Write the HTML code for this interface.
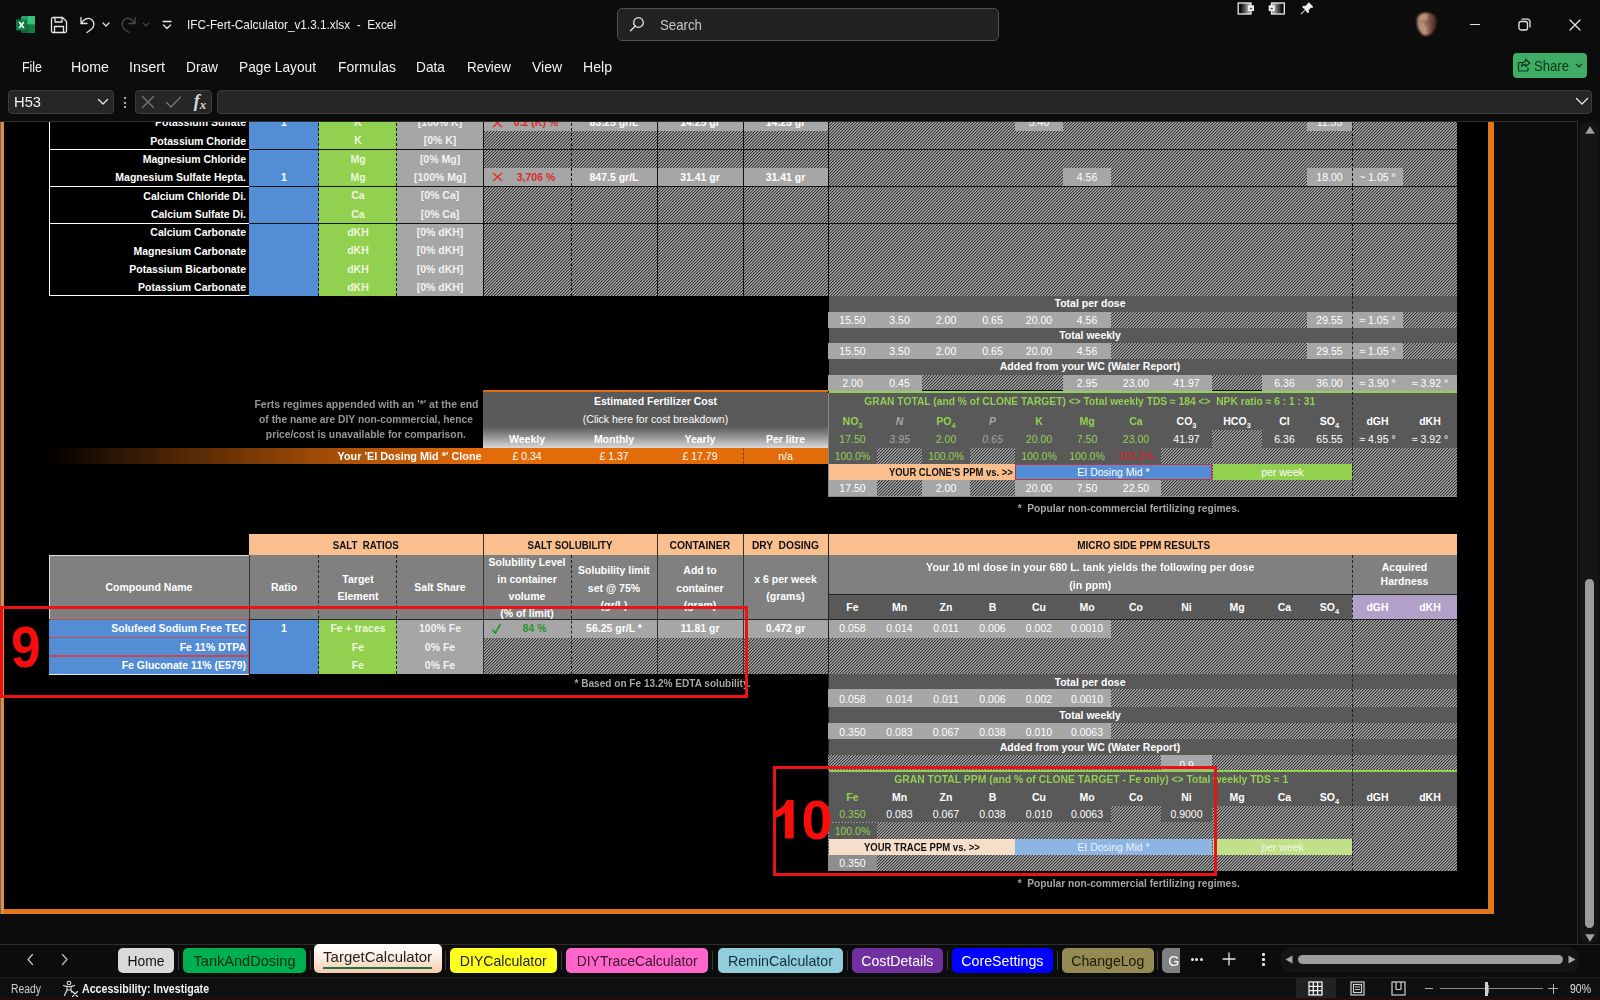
<!DOCTYPE html><html><head><meta charset="utf-8"><title>Excel</title><style>html,body{margin:0;padding:0;background:#0c0c0c;overflow:hidden}
#root{position:relative;width:1600px;height:1000px;overflow:hidden;font-family:"Liberation Sans",sans-serif;background:#0c0c0c}
#root div,#root svg{position:absolute}
#root .t{display:flex;align-items:center;white-space:nowrap;box-sizing:border-box;line-height:1}
#root .t span{display:inline-block;position:static;white-space:pre}
#root .t sub{font-size:70%;vertical-align:baseline;position:relative;top:3px}
.h{background:repeating-linear-gradient(135deg,#3b3b3b 0,#3b3b3b 1.06px,#b4b4b4 1.06px,#b4b4b4 2.1213px)}
</style></head><body><div id="root">
<svg width="0" height="0" style="left:0;top:0"><defs><pattern id="hp" width="3" height="3" patternUnits="userSpaceOnUse" shape-rendering="crispEdges"><rect width="3" height="3" fill="#a8a8a8"/><rect x="0" y="0" width="1" height="1" fill="#363636"/><rect x="2" y="1" width="1" height="1" fill="#363636"/><rect x="1" y="2" width="1" height="1" fill="#363636"/><rect x="1" y="0" width="1" height="1" fill="#7d7d7d"/><rect x="0" y="1" width="1" height="1" fill="#7d7d7d"/><rect x="2" y="2" width="1" height="1" fill="#7d7d7d"/></pattern></defs></svg>
<div id="sheet" style="left:0;top:0;width:1600px;height:1000px">
<div style="left:0px;top:120px;width:1581px;height:824px;background:#0c0c0c;"></div>
<div style="left:0px;top:120px;width:1494px;height:794px;background:#000;"></div>
<div style="left:1488px;top:120px;width:6px;height:794px;background:#e2761b;"></div>
<div style="left:0px;top:909px;width:1494px;height:5px;background:#e2761b;"></div>
<div style="left:1px;top:120px;width:2.5px;height:794px;background:#e38a42;"></div>
<div style="left:0px;top:120px;width:1px;height:824px;background:#6a6a6a;"></div>
<div style="left:249px;top:113px;width:69.5px;height:183.3px;background:#538dd5;"></div>
<div style="left:318.5px;top:113px;width:78.2px;height:183.3px;background:#92d050;"></div>
<div style="left:396.7px;top:113px;width:86.3px;height:183.3px;background:#a6a6a6;"></div>
<svg style="left:483px;top:113px" width="974" height="183" viewBox="483 113 974 183" shape-rendering="crispEdges"><rect x="483" y="113" width="974" height="183" fill="url(#hp)"/></svg>
<div class="t" style="left:49px;top:113.5px;width:200px;height:18.3px;color:#fff;font-size:10.5px;justify-content:flex-end;font-weight:bold;padding-right:3px;"><span style="transform:scaleX(1.000);transform-origin:right center">Potassium Sulfate</span></div>
<div class="t" style="left:249px;top:113px;width:70px;height:18.3px;color:#fff;font-size:10.5px;justify-content:center;font-weight:bold;"><span style="transform:scaleX(1.000);transform-origin:center center">1</span></div>
<div class="t" style="left:319px;top:113px;width:78px;height:18.3px;color:#eef7dd;font-size:10.5px;justify-content:center;font-weight:bold;"><span style="transform:scaleX(1.000);transform-origin:center center">K</span></div>
<div class="t" style="left:397px;top:113px;width:86px;height:18.3px;color:#f2f2f2;font-size:10.5px;justify-content:center;font-weight:bold;"><span style="transform:scaleX(1.000);transform-origin:center center">[100% K]</span></div>
<div class="t" style="left:49px;top:131.8px;width:200px;height:18.4px;color:#fff;font-size:10.5px;justify-content:flex-end;font-weight:bold;padding-right:3px;"><span style="transform:scaleX(1.000);transform-origin:right center">Potassium Choride</span></div>
<div class="t" style="left:319px;top:131.3px;width:78px;height:18.4px;color:#eef7dd;font-size:10.5px;justify-content:center;font-weight:bold;"><span style="transform:scaleX(1.000);transform-origin:center center">K</span></div>
<div class="t" style="left:397px;top:131.3px;width:86px;height:18.4px;color:#f2f2f2;font-size:10.5px;justify-content:center;font-weight:bold;"><span style="transform:scaleX(1.000);transform-origin:center center">[0% K]</span></div>
<div class="t" style="left:49px;top:150.2px;width:200px;height:18.3px;color:#fff;font-size:10.5px;justify-content:flex-end;font-weight:bold;padding-right:3px;"><span style="transform:scaleX(1.000);transform-origin:right center">Magnesium Chloride</span></div>
<div class="t" style="left:319px;top:149.7px;width:78px;height:18.3px;color:#eef7dd;font-size:10.5px;justify-content:center;font-weight:bold;"><span style="transform:scaleX(1.000);transform-origin:center center">Mg</span></div>
<div class="t" style="left:397px;top:149.7px;width:86px;height:18.3px;color:#f2f2f2;font-size:10.5px;justify-content:center;font-weight:bold;"><span style="transform:scaleX(1.000);transform-origin:center center">[0% Mg]</span></div>
<div class="t" style="left:49px;top:168.5px;width:200px;height:18.3px;color:#fff;font-size:10.5px;justify-content:flex-end;font-weight:bold;padding-right:3px;"><span style="transform:scaleX(1.000);transform-origin:right center">Magnesium Sulfate Hepta.</span></div>
<div class="t" style="left:249px;top:168px;width:70px;height:18.3px;color:#fff;font-size:10.5px;justify-content:center;font-weight:bold;"><span style="transform:scaleX(1.000);transform-origin:center center">1</span></div>
<div class="t" style="left:319px;top:168px;width:78px;height:18.3px;color:#eef7dd;font-size:10.5px;justify-content:center;font-weight:bold;"><span style="transform:scaleX(1.000);transform-origin:center center">Mg</span></div>
<div class="t" style="left:397px;top:168px;width:86px;height:18.3px;color:#f2f2f2;font-size:10.5px;justify-content:center;font-weight:bold;"><span style="transform:scaleX(1.000);transform-origin:center center">[100% Mg]</span></div>
<div class="t" style="left:49px;top:186.8px;width:200px;height:18.4px;color:#fff;font-size:10.5px;justify-content:flex-end;font-weight:bold;padding-right:3px;"><span style="transform:scaleX(1.000);transform-origin:right center">Calcium Chloride Di.</span></div>
<div class="t" style="left:319px;top:186.3px;width:78px;height:18.4px;color:#eef7dd;font-size:10.5px;justify-content:center;font-weight:bold;"><span style="transform:scaleX(1.000);transform-origin:center center">Ca</span></div>
<div class="t" style="left:397px;top:186.3px;width:86px;height:18.4px;color:#f2f2f2;font-size:10.5px;justify-content:center;font-weight:bold;"><span style="transform:scaleX(1.000);transform-origin:center center">[0% Ca]</span></div>
<div class="t" style="left:49px;top:205.2px;width:200px;height:18.3px;color:#fff;font-size:10.5px;justify-content:flex-end;font-weight:bold;padding-right:3px;"><span style="transform:scaleX(1.000);transform-origin:right center">Calcium Sulfate Di.</span></div>
<div class="t" style="left:319px;top:204.7px;width:78px;height:18.3px;color:#eef7dd;font-size:10.5px;justify-content:center;font-weight:bold;"><span style="transform:scaleX(1.000);transform-origin:center center">Ca</span></div>
<div class="t" style="left:397px;top:204.7px;width:86px;height:18.3px;color:#f2f2f2;font-size:10.5px;justify-content:center;font-weight:bold;"><span style="transform:scaleX(1.000);transform-origin:center center">[0% Ca]</span></div>
<div class="t" style="left:49px;top:223.5px;width:200px;height:18.3px;color:#fff;font-size:10.5px;justify-content:flex-end;font-weight:bold;padding-right:3px;"><span style="transform:scaleX(1.000);transform-origin:right center">Calcium Carbonate</span></div>
<div class="t" style="left:319px;top:223px;width:78px;height:18.3px;color:#eef7dd;font-size:10.5px;justify-content:center;font-weight:bold;"><span style="transform:scaleX(1.000);transform-origin:center center">dKH</span></div>
<div class="t" style="left:397px;top:223px;width:86px;height:18.3px;color:#f2f2f2;font-size:10.5px;justify-content:center;font-weight:bold;"><span style="transform:scaleX(1.000);transform-origin:center center">[0% dKH]</span></div>
<div class="t" style="left:49px;top:241.8px;width:200px;height:18.4px;color:#fff;font-size:10.5px;justify-content:flex-end;font-weight:bold;padding-right:3px;"><span style="transform:scaleX(1.000);transform-origin:right center">Magnesium Carbonate</span></div>
<div class="t" style="left:319px;top:241.3px;width:78px;height:18.4px;color:#eef7dd;font-size:10.5px;justify-content:center;font-weight:bold;"><span style="transform:scaleX(1.000);transform-origin:center center">dKH</span></div>
<div class="t" style="left:397px;top:241.3px;width:86px;height:18.4px;color:#f2f2f2;font-size:10.5px;justify-content:center;font-weight:bold;"><span style="transform:scaleX(1.000);transform-origin:center center">[0% dKH]</span></div>
<div class="t" style="left:49px;top:260.2px;width:200px;height:18.3px;color:#fff;font-size:10.5px;justify-content:flex-end;font-weight:bold;padding-right:3px;"><span style="transform:scaleX(1.000);transform-origin:right center">Potassium Bicarbonate</span></div>
<div class="t" style="left:319px;top:259.7px;width:78px;height:18.3px;color:#eef7dd;font-size:10.5px;justify-content:center;font-weight:bold;"><span style="transform:scaleX(1.000);transform-origin:center center">dKH</span></div>
<div class="t" style="left:397px;top:259.7px;width:86px;height:18.3px;color:#f2f2f2;font-size:10.5px;justify-content:center;font-weight:bold;"><span style="transform:scaleX(1.000);transform-origin:center center">[0% dKH]</span></div>
<div class="t" style="left:49px;top:278.5px;width:200px;height:18.3px;color:#fff;font-size:10.5px;justify-content:flex-end;font-weight:bold;padding-right:3px;"><span style="transform:scaleX(1.000);transform-origin:right center">Potassium Carbonate</span></div>
<div class="t" style="left:319px;top:278px;width:78px;height:18.3px;color:#eef7dd;font-size:10.5px;justify-content:center;font-weight:bold;"><span style="transform:scaleX(1.000);transform-origin:center center">dKH</span></div>
<div class="t" style="left:397px;top:278px;width:86px;height:18.3px;color:#f2f2f2;font-size:10.5px;justify-content:center;font-weight:bold;"><span style="transform:scaleX(1.000);transform-origin:center center">[0% dKH]</span></div>
<div style="left:483px;top:113px;width:88px;height:18.3px;background:#a6a6a6;"></div>
<div class="t" style="left:483px;top:113px;width:88px;height:18.3px;color:#de2a2a;font-size:10.5px;justify-content:center;font-weight:bold;padding-left:18px;"><span style="transform:scaleX(1.000);transform-origin:center center">0.2 (K) %</span></div>
<svg style="left:491.500px;top:117.5px" width="11" height="10" viewBox="0 0 11 10" fill="none" stroke="#e22a2a" stroke-width="1.400"><path d="M1 1l9 8M10 1l-9 8"/></svg>
<div style="left:571px;top:113px;width:86px;height:18.3px;background:#a6a6a6;"></div>
<div class="t" style="left:571px;top:113px;width:86px;height:18.3px;color:#fff;font-size:10.5px;justify-content:center;font-weight:bold;"><span style="transform:scaleX(1.000);transform-origin:center center">83.25 gr/L</span></div>
<div style="left:657px;top:113px;width:86px;height:18.3px;background:#a6a6a6;"></div>
<div class="t" style="left:657px;top:113px;width:86px;height:18.3px;color:#fff;font-size:10.5px;justify-content:center;font-weight:bold;"><span style="transform:scaleX(1.000);transform-origin:center center">14.25 gr</span></div>
<div style="left:743px;top:113px;width:85px;height:18.3px;background:#a6a6a6;"></div>
<div class="t" style="left:743px;top:113px;width:85px;height:18.3px;color:#fff;font-size:10.5px;justify-content:center;font-weight:bold;"><span style="transform:scaleX(1.000);transform-origin:center center">14.25 gr</span></div>
<div style="left:1015px;top:113px;width:48px;height:18.3px;background:#a6a6a6;"></div>
<div class="t" style="left:1015px;top:113px;width:48px;height:18.3px;color:#fff;font-size:10.5px;justify-content:center;"><span style="transform:scaleX(1.000);transform-origin:center center">5.40</span></div>
<div style="left:1307px;top:113px;width:45px;height:18.3px;background:#a6a6a6;"></div>
<div class="t" style="left:1307px;top:113px;width:45px;height:18.3px;color:#fff;font-size:10.5px;justify-content:center;"><span style="transform:scaleX(1.000);transform-origin:center center">11.55</span></div>
<div style="left:483px;top:168px;width:88px;height:18.3px;background:#a6a6a6;"></div>
<div class="t" style="left:483px;top:168px;width:88px;height:18.3px;color:#de2a2a;font-size:10.5px;justify-content:center;font-weight:bold;padding-left:18px;"><span style="transform:scaleX(1.000);transform-origin:center center">3,706 %</span></div>
<svg style="left:491.500px;top:171.5px" width="11" height="10" viewBox="0 0 11 10" fill="none" stroke="#e22a2a" stroke-width="1.400"><path d="M1 1l9 8M10 1l-9 8"/></svg>
<div style="left:571px;top:168px;width:86px;height:18.3px;background:#a6a6a6;"></div>
<div class="t" style="left:571px;top:168px;width:86px;height:18.3px;color:#fff;font-size:10.5px;justify-content:center;font-weight:bold;"><span style="transform:scaleX(1.000);transform-origin:center center">847.5 gr/L</span></div>
<div style="left:657px;top:168px;width:86px;height:18.3px;background:#a6a6a6;"></div>
<div class="t" style="left:657px;top:168px;width:86px;height:18.3px;color:#fff;font-size:10.5px;justify-content:center;font-weight:bold;"><span style="transform:scaleX(1.000);transform-origin:center center">31.41 gr</span></div>
<div style="left:743px;top:168px;width:85px;height:18.3px;background:#a6a6a6;"></div>
<div class="t" style="left:743px;top:168px;width:85px;height:18.3px;color:#fff;font-size:10.5px;justify-content:center;font-weight:bold;"><span style="transform:scaleX(1.000);transform-origin:center center">31.41 gr</span></div>
<div style="left:1063px;top:168px;width:48px;height:18.3px;background:#a6a6a6;"></div>
<div class="t" style="left:1063px;top:168px;width:48px;height:18.3px;color:#fff;font-size:10.5px;justify-content:center;"><span style="transform:scaleX(1.000);transform-origin:center center">4.56</span></div>
<div style="left:1307px;top:168px;width:45px;height:18.3px;background:#a6a6a6;"></div>
<div class="t" style="left:1307px;top:168px;width:45px;height:18.3px;color:#fff;font-size:10.5px;justify-content:center;"><span style="transform:scaleX(1.000);transform-origin:center center">18.00</span></div>
<div style="left:1352px;top:168px;width:51px;height:18.3px;background:#a6a6a6;"></div>
<div class="t" style="left:1352px;top:168px;width:51px;height:18.3px;color:#fff;font-size:10.5px;justify-content:center;"><span style="transform:scaleX(1.000);transform-origin:center center">~ 1.05 °</span></div>
<div style="left:49px;top:149.2px;width:200px;height:1px;background:#fff;"></div>
<div style="left:249px;top:149.2px;width:1208px;height:1px;background:#111;"></div>
<div style="left:49px;top:185.8px;width:200px;height:1px;background:#fff;"></div>
<div style="left:249px;top:185.8px;width:1208px;height:1px;background:#111;"></div>
<div style="left:49px;top:222.5px;width:200px;height:1px;background:#fff;"></div>
<div style="left:249px;top:222.5px;width:1208px;height:1px;background:#111;"></div>
<div style="left:49px;top:113px;width:1px;height:183.3px;background:#fff;"></div>
<div style="left:49px;top:295.3px;width:200px;height:1px;background:#fff;"></div>
<div style="left:318px;top:113.0px;height:183.3px;width:0;border-left:1px dashed #111"></div>
<div style="left:396.2px;top:113.0px;height:183.3px;width:0;border-left:1px dashed #111"></div>
<div style="left:482.5px;top:113px;width:1px;height:183.3px;background:#111;"></div>
<div style="left:570.5px;top:113.0px;height:183.3px;width:0;border-left:1px dashed #111"></div>
<div style="left:656.5px;top:113px;width:1px;height:183.3px;background:#111;"></div>
<div style="left:742.5px;top:113px;width:1px;height:183.3px;background:#111;"></div>
<div style="left:827.5px;top:113px;width:1px;height:183.3px;background:#111;"></div>
<div style="left:1351.5px;top:113.0px;height:183.3px;width:0;border-left:1px dashed #111"></div>
<div style="left:828.5px;top:296.3px;width:628.5px;height:15.7px;background:#595959;"></div>
<div class="t" style="left:828px;top:295.8px;width:524px;height:15.7px;color:#fff;font-size:10.5px;justify-content:center;font-weight:bold;"><span style="transform:scaleX(1.000);transform-origin:center center">Total per dose</span></div>
<div style="left:828.5px;top:327.5px;width:628.5px;height:15.5px;background:#595959;"></div>
<div class="t" style="left:828px;top:327px;width:524px;height:15.5px;color:#fff;font-size:10.5px;justify-content:center;font-weight:bold;"><span style="transform:scaleX(1.000);transform-origin:center center">Total weekly</span></div>
<div style="left:828.5px;top:359px;width:628.5px;height:16px;background:#595959;"></div>
<div class="t" style="left:828px;top:358.5px;width:524px;height:16px;color:#fff;font-size:10.5px;justify-content:center;font-weight:bold;"><span style="transform:scaleX(1.000);transform-origin:center center">Added from your WC (Water Report)</span></div>
<svg style="left:828px;top:312px" width="629" height="16" viewBox="828 312 629 16" shape-rendering="crispEdges"><rect x="828" y="312" width="629" height="16" fill="url(#hp)"/></svg>
<div style="left:828px;top:312px;width:49px;height:15.5px;background:#a6a6a6;"></div>
<div style="left:877px;top:312px;width:45px;height:15.5px;background:#a6a6a6;"></div>
<div style="left:922px;top:312px;width:48px;height:15.5px;background:#a6a6a6;"></div>
<div style="left:970px;top:312px;width:45px;height:15.5px;background:#a6a6a6;"></div>
<div style="left:1015px;top:312px;width:48px;height:15.5px;background:#a6a6a6;"></div>
<div style="left:1063px;top:312px;width:48px;height:15.5px;background:#a6a6a6;"></div>
<div style="left:1307px;top:312px;width:45px;height:15.5px;background:#a6a6a6;"></div>
<div style="left:1352px;top:312px;width:51px;height:15.5px;background:#a6a6a6;"></div>
<div class="t" style="left:824px;top:312px;width:57px;height:15.5px;color:#fff;font-size:10.5px;justify-content:center;"><span style="transform:scaleX(1.000);transform-origin:center center">15.50</span></div>
<div class="t" style="left:873px;top:312px;width:53px;height:15.5px;color:#fff;font-size:10.5px;justify-content:center;"><span style="transform:scaleX(1.000);transform-origin:center center">3.50</span></div>
<div class="t" style="left:918px;top:312px;width:56px;height:15.5px;color:#fff;font-size:10.5px;justify-content:center;"><span style="transform:scaleX(1.000);transform-origin:center center">2.00</span></div>
<div class="t" style="left:966px;top:312px;width:53px;height:15.5px;color:#fff;font-size:10.5px;justify-content:center;"><span style="transform:scaleX(1.000);transform-origin:center center">0.65</span></div>
<div class="t" style="left:1011px;top:312px;width:56px;height:15.5px;color:#fff;font-size:10.5px;justify-content:center;"><span style="transform:scaleX(1.000);transform-origin:center center">20.00</span></div>
<div class="t" style="left:1059px;top:312px;width:56px;height:15.5px;color:#fff;font-size:10.5px;justify-content:center;"><span style="transform:scaleX(1.000);transform-origin:center center">4.56</span></div>
<div class="t" style="left:1303px;top:312px;width:53px;height:15.5px;color:#fff;font-size:10.5px;justify-content:center;"><span style="transform:scaleX(1.000);transform-origin:center center">29.55</span></div>
<div class="t" style="left:1348px;top:312px;width:59px;height:15.5px;color:#fff;font-size:10.5px;justify-content:center;"><span style="transform:scaleX(1.000);transform-origin:center center">≈ 1.05 °</span></div>
<svg style="left:828px;top:343px" width="629" height="16" viewBox="828 343 629 16" shape-rendering="crispEdges"><rect x="828" y="343" width="629" height="16" fill="url(#hp)"/></svg>
<div style="left:828px;top:343px;width:49px;height:16px;background:#a6a6a6;"></div>
<div style="left:877px;top:343px;width:45px;height:16px;background:#a6a6a6;"></div>
<div style="left:922px;top:343px;width:48px;height:16px;background:#a6a6a6;"></div>
<div style="left:970px;top:343px;width:45px;height:16px;background:#a6a6a6;"></div>
<div style="left:1015px;top:343px;width:48px;height:16px;background:#a6a6a6;"></div>
<div style="left:1063px;top:343px;width:48px;height:16px;background:#a6a6a6;"></div>
<div style="left:1307px;top:343px;width:45px;height:16px;background:#a6a6a6;"></div>
<div style="left:1352px;top:343px;width:51px;height:16px;background:#a6a6a6;"></div>
<div class="t" style="left:824px;top:343px;width:57px;height:16px;color:#fff;font-size:10.5px;justify-content:center;"><span style="transform:scaleX(1.000);transform-origin:center center">15.50</span></div>
<div class="t" style="left:873px;top:343px;width:53px;height:16px;color:#fff;font-size:10.5px;justify-content:center;"><span style="transform:scaleX(1.000);transform-origin:center center">3.50</span></div>
<div class="t" style="left:918px;top:343px;width:56px;height:16px;color:#fff;font-size:10.5px;justify-content:center;"><span style="transform:scaleX(1.000);transform-origin:center center">2.00</span></div>
<div class="t" style="left:966px;top:343px;width:53px;height:16px;color:#fff;font-size:10.5px;justify-content:center;"><span style="transform:scaleX(1.000);transform-origin:center center">0.65</span></div>
<div class="t" style="left:1011px;top:343px;width:56px;height:16px;color:#fff;font-size:10.5px;justify-content:center;"><span style="transform:scaleX(1.000);transform-origin:center center">20.00</span></div>
<div class="t" style="left:1059px;top:343px;width:56px;height:16px;color:#fff;font-size:10.5px;justify-content:center;"><span style="transform:scaleX(1.000);transform-origin:center center">4.56</span></div>
<div class="t" style="left:1303px;top:343px;width:53px;height:16px;color:#fff;font-size:10.5px;justify-content:center;"><span style="transform:scaleX(1.000);transform-origin:center center">29.55</span></div>
<div class="t" style="left:1348px;top:343px;width:59px;height:16px;color:#fff;font-size:10.5px;justify-content:center;"><span style="transform:scaleX(1.000);transform-origin:center center">≈ 1.05 °</span></div>
<svg style="left:828px;top:375px" width="629" height="15" viewBox="828 375 629 15" shape-rendering="crispEdges"><rect x="828" y="375" width="629" height="15" fill="url(#hp)"/></svg>
<div style="left:828px;top:375px;width:49px;height:15.5px;background:#a6a6a6;"></div>
<div style="left:877px;top:375px;width:45px;height:15.5px;background:#a6a6a6;"></div>
<div style="left:1063px;top:375px;width:48px;height:15.5px;background:#a6a6a6;"></div>
<div style="left:1111px;top:375px;width:50px;height:15.5px;background:#a6a6a6;"></div>
<div style="left:1161px;top:375px;width:51px;height:15.5px;background:#a6a6a6;"></div>
<div style="left:1262px;top:375px;width:45px;height:15.5px;background:#a6a6a6;"></div>
<div style="left:1307px;top:375px;width:45px;height:15.5px;background:#a6a6a6;"></div>
<div style="left:1352px;top:375px;width:51px;height:15.5px;background:#a6a6a6;"></div>
<div style="left:1403px;top:375px;width:54px;height:15.5px;background:#a6a6a6;"></div>
<div class="t" style="left:824px;top:375px;width:57px;height:15.5px;color:#fff;font-size:10.5px;justify-content:center;"><span style="transform:scaleX(1.000);transform-origin:center center">2.00</span></div>
<div class="t" style="left:873px;top:375px;width:53px;height:15.5px;color:#fff;font-size:10.5px;justify-content:center;"><span style="transform:scaleX(1.000);transform-origin:center center">0.45</span></div>
<div class="t" style="left:1059px;top:375px;width:56px;height:15.5px;color:#fff;font-size:10.5px;justify-content:center;"><span style="transform:scaleX(1.000);transform-origin:center center">2.95</span></div>
<div class="t" style="left:1107px;top:375px;width:58px;height:15.5px;color:#fff;font-size:10.5px;justify-content:center;"><span style="transform:scaleX(1.000);transform-origin:center center">23.00</span></div>
<div class="t" style="left:1157px;top:375px;width:59px;height:15.5px;color:#fff;font-size:10.5px;justify-content:center;"><span style="transform:scaleX(1.000);transform-origin:center center">41.97</span></div>
<div class="t" style="left:1258px;top:375px;width:53px;height:15.5px;color:#fff;font-size:10.5px;justify-content:center;"><span style="transform:scaleX(1.000);transform-origin:center center">6.36</span></div>
<div class="t" style="left:1303px;top:375px;width:53px;height:15.5px;color:#fff;font-size:10.5px;justify-content:center;"><span style="transform:scaleX(1.000);transform-origin:center center">36.00</span></div>
<div class="t" style="left:1348px;top:375px;width:59px;height:15.5px;color:#fff;font-size:10.5px;justify-content:center;"><span style="transform:scaleX(1.000);transform-origin:center center">≈ 3.90 °</span></div>
<div class="t" style="left:1399px;top:375px;width:62px;height:15.5px;color:#fff;font-size:10.5px;justify-content:center;"><span style="transform:scaleX(1.000);transform-origin:center center">≈ 3.92 °</span></div>
<div style="left:828.5px;top:390.5px;width:628.5px;height:2px;background:#92d050;"></div>
<div style="left:828.5px;top:392.5px;width:628.5px;height:55.5px;background:#595959;"></div>
<div class="t" style="left:828px;top:391.5px;width:524px;height:19.5px;color:#92d050;font-size:10.5px;justify-content:center;font-weight:bold;"><span style="transform:scaleX(0.977);transform-origin:center center">GRAN TOTAL (and % of CLONE TARGET) &lt;&gt; Total weekly TDS ≈ 184 &lt;&gt;  NPK ratio ≈ 6 : 1 : 31</span></div>
<div class="t" style="left:824px;top:412px;width:57px;height:18px;color:#92d050;font-size:10.5px;justify-content:center;font-weight:bold;"><span style="transform:scaleX(1.000);transform-origin:center center">NO<sub>3</sub></span></div>
<div class="t" style="left:873px;top:412px;width:53px;height:18px;color:#a6a6a6;font-size:10.5px;justify-content:center;font-weight:bold;font-style:italic;"><span style="transform:scaleX(1.000);transform-origin:center center">N</span></div>
<div class="t" style="left:918px;top:412px;width:56px;height:18px;color:#92d050;font-size:10.5px;justify-content:center;font-weight:bold;"><span style="transform:scaleX(1.000);transform-origin:center center">PO<sub>4</sub></span></div>
<div class="t" style="left:966px;top:412px;width:53px;height:18px;color:#a6a6a6;font-size:10.5px;justify-content:center;font-weight:bold;font-style:italic;"><span style="transform:scaleX(1.000);transform-origin:center center">P</span></div>
<div class="t" style="left:1011px;top:412px;width:56px;height:18px;color:#92d050;font-size:10.5px;justify-content:center;font-weight:bold;"><span style="transform:scaleX(1.000);transform-origin:center center">K</span></div>
<div class="t" style="left:1059px;top:412px;width:56px;height:18px;color:#92d050;font-size:10.5px;justify-content:center;font-weight:bold;"><span style="transform:scaleX(1.000);transform-origin:center center">Mg</span></div>
<div class="t" style="left:1107px;top:412px;width:58px;height:18px;color:#92d050;font-size:10.5px;justify-content:center;font-weight:bold;"><span style="transform:scaleX(1.000);transform-origin:center center">Ca</span></div>
<div class="t" style="left:1157px;top:412px;width:59px;height:18px;color:#fff;font-size:10.5px;justify-content:center;font-weight:bold;"><span style="transform:scaleX(1.000);transform-origin:center center">CO<sub>3</sub></span></div>
<div class="t" style="left:1208px;top:412px;width:58px;height:18px;color:#fff;font-size:10.5px;justify-content:center;font-weight:bold;"><span style="transform:scaleX(1.000);transform-origin:center center">HCO<sub>3</sub></span></div>
<div class="t" style="left:1258px;top:412px;width:53px;height:18px;color:#fff;font-size:10.5px;justify-content:center;font-weight:bold;"><span style="transform:scaleX(1.000);transform-origin:center center">Cl</span></div>
<div class="t" style="left:1303px;top:412px;width:53px;height:18px;color:#fff;font-size:10.5px;justify-content:center;font-weight:bold;"><span style="transform:scaleX(1.000);transform-origin:center center">SO<sub>4</sub></span></div>
<div class="t" style="left:1348px;top:412px;width:59px;height:18px;color:#fff;font-size:10.5px;justify-content:center;font-weight:bold;"><span style="transform:scaleX(1.000);transform-origin:center center">dGH</span></div>
<div class="t" style="left:1399px;top:412px;width:62px;height:18px;color:#fff;font-size:10.5px;justify-content:center;font-weight:bold;"><span style="transform:scaleX(1.000);transform-origin:center center">dKH</span></div>
<svg style="left:1212px;top:430px" width="50" height="18" viewBox="1212 430 50 18" shape-rendering="crispEdges"><rect x="1212" y="430" width="50" height="18" fill="url(#hp)"/></svg>
<div class="t" style="left:824px;top:430px;width:57px;height:18px;color:#92d050;font-size:10.5px;justify-content:center;"><span style="transform:scaleX(1.000);transform-origin:center center">17.50</span></div>
<div class="t" style="left:873px;top:430px;width:53px;height:18px;color:#a6a6a6;font-size:10.5px;justify-content:center;font-style:italic;"><span style="transform:scaleX(1.000);transform-origin:center center">3.95</span></div>
<div class="t" style="left:918px;top:430px;width:56px;height:18px;color:#92d050;font-size:10.5px;justify-content:center;"><span style="transform:scaleX(1.000);transform-origin:center center">2.00</span></div>
<div class="t" style="left:966px;top:430px;width:53px;height:18px;color:#a6a6a6;font-size:10.5px;justify-content:center;font-style:italic;"><span style="transform:scaleX(1.000);transform-origin:center center">0.65</span></div>
<div class="t" style="left:1011px;top:430px;width:56px;height:18px;color:#92d050;font-size:10.5px;justify-content:center;"><span style="transform:scaleX(1.000);transform-origin:center center">20.00</span></div>
<div class="t" style="left:1059px;top:430px;width:56px;height:18px;color:#92d050;font-size:10.5px;justify-content:center;"><span style="transform:scaleX(1.000);transform-origin:center center">7.50</span></div>
<div class="t" style="left:1107px;top:430px;width:58px;height:18px;color:#92d050;font-size:10.5px;justify-content:center;"><span style="transform:scaleX(1.000);transform-origin:center center">23.00</span></div>
<div class="t" style="left:1157px;top:430px;width:59px;height:18px;color:#fff;font-size:10.5px;justify-content:center;"><span style="transform:scaleX(1.000);transform-origin:center center">41.97</span></div>
<div class="t" style="left:1258px;top:430px;width:53px;height:18px;color:#fff;font-size:10.5px;justify-content:center;"><span style="transform:scaleX(1.000);transform-origin:center center">6.36</span></div>
<div class="t" style="left:1303px;top:430px;width:53px;height:18px;color:#fff;font-size:10.5px;justify-content:center;"><span style="transform:scaleX(1.000);transform-origin:center center">65.55</span></div>
<div class="t" style="left:1348px;top:430px;width:59px;height:18px;color:#fff;font-size:10.5px;justify-content:center;"><span style="transform:scaleX(1.000);transform-origin:center center">≈ 4.95 °</span></div>
<div class="t" style="left:1399px;top:430px;width:62px;height:18px;color:#fff;font-size:10.5px;justify-content:center;"><span style="transform:scaleX(1.000);transform-origin:center center">≈ 3.92 °</span></div>
<svg style="left:828px;top:448px" width="629" height="16" viewBox="828 448 629 16" shape-rendering="crispEdges"><rect x="828" y="448" width="629" height="16" fill="url(#hp)"/></svg>
<div style="left:828px;top:448px;width:49px;height:16px;background:#595959;"></div>
<div class="t" style="left:824px;top:448px;width:57px;height:16px;color:#92d050;font-size:10.5px;justify-content:center;"><span style="transform:scaleX(1.000);transform-origin:center center">100.0%</span></div>
<div style="left:922px;top:448px;width:48px;height:16px;background:#595959;"></div>
<div class="t" style="left:918px;top:448px;width:56px;height:16px;color:#92d050;font-size:10.5px;justify-content:center;"><span style="transform:scaleX(1.000);transform-origin:center center">100.0%</span></div>
<div style="left:1015px;top:448px;width:48px;height:16px;background:#595959;"></div>
<div class="t" style="left:1011px;top:448px;width:56px;height:16px;color:#92d050;font-size:10.5px;justify-content:center;"><span style="transform:scaleX(1.000);transform-origin:center center">100.0%</span></div>
<div style="left:1063px;top:448px;width:48px;height:16px;background:#595959;"></div>
<div class="t" style="left:1059px;top:448px;width:56px;height:16px;color:#92d050;font-size:10.5px;justify-content:center;"><span style="transform:scaleX(1.000);transform-origin:center center">100.0%</span></div>
<div style="left:1111px;top:448px;width:50px;height:16px;background:#595959;"></div>
<div class="t" style="left:1107px;top:448px;width:58px;height:16px;color:#e02020;font-size:10.5px;justify-content:center;"><span style="transform:scaleX(1.000);transform-origin:center center">102.2%</span></div>
<svg style="left:828px;top:464px" width="629" height="16" viewBox="828 464 629 16" shape-rendering="crispEdges"><rect x="828" y="464" width="629" height="16" fill="url(#hp)"/></svg>
<div style="left:828.5px;top:464px;width:186.5px;height:16px;background:#fabf8f;"></div>
<div class="t" style="left:828px;top:464px;width:187px;height:16px;color:#111;font-size:10.5px;justify-content:flex-end;font-weight:bold;padding-right:2.5px;"><span style="transform:scaleX(0.899);transform-origin:right center">YOUR CLONE'S PPM vs. &gt;&gt;</span></div>
<div style="left:1015px;top:464px;width:197px;height:16px;background:#538dd5;box-shadow:inset 0 0 0 1px #d03030;"></div>
<div class="t" style="left:1015px;top:464px;width:197px;height:16px;color:#fff;font-size:10.5px;justify-content:center;"><span style="transform:scaleX(1.000);transform-origin:center center">EI Dosing Mid *</span></div>
<div style="left:1213px;top:464px;width:139px;height:16px;background:#92d050;"></div>
<div class="t" style="left:1213px;top:464px;width:139px;height:16px;color:#fff;font-size:10.5px;justify-content:center;"><span style="transform:scaleX(1.000);transform-origin:center center">per week</span></div>
<svg style="left:828px;top:480px" width="629" height="16" viewBox="828 480 629 16" shape-rendering="crispEdges"><rect x="828" y="480" width="629" height="16" fill="url(#hp)"/></svg>
<div style="left:828px;top:480px;width:49px;height:16.5px;background:#a6a6a6;"></div>
<div style="left:922px;top:480px;width:48px;height:16.5px;background:#a6a6a6;"></div>
<div style="left:1015px;top:480px;width:48px;height:16.5px;background:#a6a6a6;"></div>
<div style="left:1063px;top:480px;width:48px;height:16.5px;background:#a6a6a6;"></div>
<div style="left:1111px;top:480px;width:50px;height:16.5px;background:#a6a6a6;"></div>
<div class="t" style="left:824px;top:480px;width:57px;height:16.5px;color:#fff;font-size:10.5px;justify-content:center;"><span style="transform:scaleX(1.000);transform-origin:center center">17.50</span></div>
<div class="t" style="left:918px;top:480px;width:56px;height:16.5px;color:#fff;font-size:10.5px;justify-content:center;"><span style="transform:scaleX(1.000);transform-origin:center center">2.00</span></div>
<div class="t" style="left:1011px;top:480px;width:56px;height:16.5px;color:#fff;font-size:10.5px;justify-content:center;"><span style="transform:scaleX(1.000);transform-origin:center center">20.00</span></div>
<div class="t" style="left:1059px;top:480px;width:56px;height:16.5px;color:#fff;font-size:10.5px;justify-content:center;"><span style="transform:scaleX(1.000);transform-origin:center center">7.50</span></div>
<div class="t" style="left:1107px;top:480px;width:58px;height:16.5px;color:#fff;font-size:10.5px;justify-content:center;"><span style="transform:scaleX(1.000);transform-origin:center center">22.50</span></div>
<div style="left:1351.5px;top:296.3px;height:200.2px;width:0;border-left:1px dashed #222"></div>
<div style="left:828px;top:392.5px;width:1px;height:104.5px;background:#8a8a8a;"></div>
<div style="left:828px;top:496.3px;width:629px;height:0.9px;background:#8a8a8a;"></div>
<div class="t" style="left:990px;top:499px;width:270px;height:18px;color:#a6a6a6;font-size:10.5px;justify-content:flex-end;font-weight:bold;padding-right:20px;"><span style="transform:scaleX(0.971);transform-origin:right center">*  Popular non-commercial fertilizing regimes.</span></div>
<div style="left:483px;top:390.5px;width:345px;height:57.5px;background:linear-gradient(#595959 0,#5a5a5a 62%,#8a8a8a 78%,#d9d9d9 100%)"></div>
<div style="left:483px;top:390px;width:345px;height:1.5px;background:#e26b0a;"></div>
<div class="t" style="left:483px;top:392px;width:345px;height:18px;color:#fff;font-size:10.5px;justify-content:center;font-weight:bold;"><span style="transform:scaleX(1.000);transform-origin:center center">Estimated Fertilizer Cost</span></div>
<div class="t" style="left:483px;top:410px;width:345px;height:18px;color:#fff;font-size:10.5px;justify-content:center;"><span style="transform:scaleX(1.000);transform-origin:center center">(Click here for cost breakdown)</span></div>
<div class="t" style="left:483px;top:430px;width:88px;height:18px;color:#fff;font-size:10.5px;justify-content:center;font-weight:bold;"><span style="transform:scaleX(1.000);transform-origin:center center">Weekly</span></div>
<div class="t" style="left:571px;top:430px;width:86px;height:18px;color:#fff;font-size:10.5px;justify-content:center;font-weight:bold;"><span style="transform:scaleX(1.000);transform-origin:center center">Monthly</span></div>
<div class="t" style="left:657px;top:430px;width:86px;height:18px;color:#fff;font-size:10.5px;justify-content:center;font-weight:bold;"><span style="transform:scaleX(1.000);transform-origin:center center">Yearly</span></div>
<div class="t" style="left:743px;top:430px;width:85px;height:18px;color:#fff;font-size:10.5px;justify-content:center;font-weight:bold;"><span style="transform:scaleX(1.000);transform-origin:center center">Per litre</span></div>
<div style="left:49px;top:448px;width:779px;height:16px;background:linear-gradient(90deg,#000 0,#2a1403 8%,#a04c07 35%,#e26b0a 55%,#e26b0a 100%)"></div>
<div class="t" style="left:249px;top:448px;width:234px;height:16px;color:#fff;font-size:10.5px;justify-content:flex-end;font-weight:bold;padding-right:1px;"><span style="transform:scaleX(1.032);transform-origin:right center">Your 'EI Dosing Mid *' Clone</span></div>
<div class="t" style="left:483px;top:448px;width:88px;height:16px;color:#fff;font-size:10.5px;justify-content:center;"><span style="transform:scaleX(1.000);transform-origin:center center">£ 0.34</span></div>
<div class="t" style="left:571px;top:448px;width:86px;height:16px;color:#fff;font-size:10.5px;justify-content:center;"><span style="transform:scaleX(1.000);transform-origin:center center">£ 1.37</span></div>
<div class="t" style="left:657px;top:448px;width:86px;height:16px;color:#fff;font-size:10.5px;justify-content:center;"><span style="transform:scaleX(1.000);transform-origin:center center">£ 17.79</span></div>
<div class="t" style="left:743px;top:448px;width:85px;height:16px;color:#fff;font-size:10.5px;justify-content:center;"><span style="transform:scaleX(1.000);transform-origin:center center">n/a</span></div>
<div style="left:742.5px;top:448px;height:16px;width:0;border-left:1px dashed #8a3a05"></div>
<div class="t" style="left:249px;top:397px;width:234px;height:15px;color:#969696;font-size:10.5px;justify-content:center;font-weight:bold;"><span style="transform:scaleX(0.996);transform-origin:center center">Ferts regimes appended with an '*' at the end</span></div>
<div class="t" style="left:249px;top:412px;width:234px;height:15px;color:#969696;font-size:10.5px;justify-content:center;font-weight:bold;"><span style="transform:scaleX(0.981);transform-origin:center center">of the name are DIY non-commercial, hence</span></div>
<div class="t" style="left:249px;top:427px;width:234px;height:15px;color:#969696;font-size:10.5px;justify-content:center;font-weight:bold;"><span style="transform:scaleX(0.982);transform-origin:center center">price/cost is unavailable for comparison.</span></div>
<div style="left:249px;top:534px;width:1208px;height:20.5px;background:#fabf8f;"></div>
<div class="t" style="left:249px;top:534.75px;width:234px;height:20.5px;color:#111;font-size:10.5px;justify-content:center;font-weight:bold;"><span style="transform:scaleX(0.925);transform-origin:center center">SALT  RATIOS</span></div>
<div class="t" style="left:483px;top:534.75px;width:174px;height:20.5px;color:#111;font-size:10.5px;justify-content:center;font-weight:bold;"><span style="transform:scaleX(0.924);transform-origin:center center">SALT SOLUBILITY</span></div>
<div class="t" style="left:657px;top:534.75px;width:86px;height:20.5px;color:#111;font-size:10.5px;justify-content:center;font-weight:bold;"><span style="transform:scaleX(0.982);transform-origin:center center">CONTAINER</span></div>
<div class="t" style="left:743px;top:534.75px;width:85px;height:20.5px;color:#111;font-size:10.5px;justify-content:center;font-weight:bold;"><span style="transform:scaleX(0.973);transform-origin:center center">DRY  DOSING</span></div>
<div class="t" style="left:828px;top:534.75px;width:632px;height:20.5px;color:#111;font-size:10.5px;justify-content:center;font-weight:bold;"><span style="transform:scaleX(0.955);transform-origin:center center">MICRO SIDE PPM RESULTS</span></div>
<div style="left:482.5px;top:534px;width:1px;height:20.5px;background:#333;"></div>
<div style="left:656.5px;top:534px;width:1px;height:20.5px;background:#333;"></div>
<div style="left:742.5px;top:534px;width:1px;height:20.5px;background:#333;"></div>
<div style="left:827.5px;top:534px;width:1px;height:20.5px;background:#333;"></div>
<div style="left:49px;top:554.5px;width:1408px;height:65px;background:#808080;"></div>
<div style="left:49px;top:554.5px;width:1px;height:119.8px;background:#ddd;"></div>
<div style="left:49px;top:554.5px;width:200px;height:1px;background:#ddd;"></div>
<div class="t" style="left:49px;top:555.2px;width:200px;height:65px;color:#fff;font-size:10.5px;justify-content:center;font-weight:bold;"><span style="transform:scaleX(1.000);transform-origin:center center">Compound Name</span></div>
<div class="t" style="left:249px;top:555.2px;width:70px;height:65px;color:#fff;font-size:10.5px;justify-content:center;font-weight:bold;"><span style="transform:scaleX(1.000);transform-origin:center center">Ratio</span></div>
<div class="t" style="left:319px;top:555.7px;width:78px;height:65px;color:#fff;font-size:10.5px;justify-content:center;font-weight:bold;line-height:17.3px;text-align:center;overflow:hidden;"><span style="transform:scaleX(1.000);transform-origin:center center">Target<br>Element</span></div>
<div class="t" style="left:397px;top:555.2px;width:86px;height:65px;color:#fff;font-size:10.5px;justify-content:center;font-weight:bold;"><span style="transform:scaleX(1.000);transform-origin:center center">Salt Share</span></div>
<div class="t" style="left:483px;top:555.7px;width:88px;height:65px;color:#fff;font-size:10.5px;justify-content:center;font-weight:bold;line-height:17.3px;text-align:center;overflow:hidden;"><span style="transform:scaleX(1.000);transform-origin:center center">Solubility Level<br>in container<br>volume<br>(% of limit)</span></div>
<div class="t" style="left:571px;top:555.7px;width:86px;height:65px;color:#fff;font-size:10.5px;justify-content:center;font-weight:bold;line-height:17.3px;text-align:center;overflow:hidden;"><span style="transform:scaleX(1.000);transform-origin:center center">Solubility limit<br>set @ 75%<br>(gr/L)</span></div>
<div class="t" style="left:657px;top:555.7px;width:86px;height:65px;color:#fff;font-size:10.5px;justify-content:center;font-weight:bold;line-height:17.3px;text-align:center;overflow:hidden;"><span style="transform:scaleX(1.000);transform-origin:center center">Add to<br>container<br>(gram)</span></div>
<div class="t" style="left:743px;top:555.7px;width:85px;height:65px;color:#fff;font-size:10.5px;justify-content:center;font-weight:bold;line-height:17.3px;text-align:center;overflow:hidden;"><span style="transform:scaleX(1.000);transform-origin:center center">x 6 per week<br>(grams)</span></div>
<div class="t" style="left:828px;top:556px;width:524px;height:39.5px;color:#fff;font-size:10.5px;justify-content:center;font-weight:bold;line-height:18px;text-align:center;"><span style="transform:scaleX(1.018);transform-origin:center center">Your 10 ml dose in your 680 L. tank yields the following per dose<br>(in ppm)</span></div>
<div class="t" style="left:1352px;top:554.5px;width:105px;height:39.5px;color:#fff;font-size:10.5px;justify-content:center;font-weight:bold;line-height:14.5px;text-align:center;"><span style="transform:scaleX(1.000);transform-origin:center center">Acquired<br>Hardness</span></div>
<div style="left:828.5px;top:594.5px;width:523.5px;height:25px;background:#595959;"></div>
<div style="left:1352px;top:594.5px;width:105px;height:25px;background:#b1a0c7;"></div>
<div style="left:828.5px;top:594px;width:628.5px;height:1px;background:#222;"></div>
<div class="t" style="left:824px;top:595px;width:57px;height:24.5px;color:#fff;font-size:10.5px;justify-content:center;font-weight:bold;"><span style="transform:scaleX(1.000);transform-origin:center center">Fe</span></div>
<div class="t" style="left:873px;top:595px;width:53px;height:24.5px;color:#fff;font-size:10.5px;justify-content:center;font-weight:bold;"><span style="transform:scaleX(1.000);transform-origin:center center">Mn</span></div>
<div class="t" style="left:918px;top:595px;width:56px;height:24.5px;color:#fff;font-size:10.5px;justify-content:center;font-weight:bold;"><span style="transform:scaleX(1.000);transform-origin:center center">Zn</span></div>
<div class="t" style="left:966px;top:595px;width:53px;height:24.5px;color:#fff;font-size:10.5px;justify-content:center;font-weight:bold;"><span style="transform:scaleX(1.000);transform-origin:center center">B</span></div>
<div class="t" style="left:1011px;top:595px;width:56px;height:24.5px;color:#fff;font-size:10.5px;justify-content:center;font-weight:bold;"><span style="transform:scaleX(1.000);transform-origin:center center">Cu</span></div>
<div class="t" style="left:1059px;top:595px;width:56px;height:24.5px;color:#fff;font-size:10.5px;justify-content:center;font-weight:bold;"><span style="transform:scaleX(1.000);transform-origin:center center">Mo</span></div>
<div class="t" style="left:1107px;top:595px;width:58px;height:24.5px;color:#fff;font-size:10.5px;justify-content:center;font-weight:bold;"><span style="transform:scaleX(1.000);transform-origin:center center">Co</span></div>
<div class="t" style="left:1157px;top:595px;width:59px;height:24.5px;color:#fff;font-size:10.5px;justify-content:center;font-weight:bold;"><span style="transform:scaleX(1.000);transform-origin:center center">Ni</span></div>
<div class="t" style="left:1208px;top:595px;width:58px;height:24.5px;color:#fff;font-size:10.5px;justify-content:center;font-weight:bold;"><span style="transform:scaleX(1.000);transform-origin:center center">Mg</span></div>
<div class="t" style="left:1258px;top:595px;width:53px;height:24.5px;color:#fff;font-size:10.5px;justify-content:center;font-weight:bold;"><span style="transform:scaleX(1.000);transform-origin:center center">Ca</span></div>
<div class="t" style="left:1303px;top:595px;width:53px;height:24.5px;color:#fff;font-size:10.5px;justify-content:center;font-weight:bold;"><span style="transform:scaleX(1.000);transform-origin:center center">SO<sub>4</sub></span></div>
<div class="t" style="left:1348px;top:595px;width:59px;height:24.5px;color:#fff;font-size:10.5px;justify-content:center;font-weight:bold;"><span style="transform:scaleX(1.000);transform-origin:center center">dGH</span></div>
<div class="t" style="left:1399px;top:595px;width:62px;height:24.5px;color:#fff;font-size:10.5px;justify-content:center;font-weight:bold;"><span style="transform:scaleX(1.000);transform-origin:center center">dKH</span></div>
<div style="left:49px;top:619px;width:1408px;height:1px;background:#222;"></div>
<div style="left:49px;top:619.5px;width:200px;height:54.8px;background:#538dd5;"></div>
<div style="left:249px;top:619.5px;width:69.5px;height:54.8px;background:#538dd5;"></div>
<div style="left:318.5px;top:619.5px;width:78.2px;height:54.8px;background:#92d050;"></div>
<div style="left:396.7px;top:619.5px;width:86.3px;height:54.8px;background:#a6a6a6;"></div>
<svg style="left:483px;top:620px" width="974" height="54" viewBox="483 620 974 54" shape-rendering="crispEdges"><rect x="483" y="620" width="974" height="54" fill="url(#hp)"/></svg>
<div style="left:483px;top:619.5px;width:628px;height:18px;background:#a6a6a6;"></div>
<div class="t" style="left:49px;top:619.5px;width:200px;height:18px;color:#fff;font-size:10.5px;justify-content:flex-end;font-weight:bold;padding-right:3px;"><span style="transform:scaleX(1.000);transform-origin:right center">Solufeed Sodium Free TEC</span></div>
<div class="t" style="left:319px;top:619.5px;width:78px;height:18px;color:#eef7dd;font-size:10.5px;justify-content:center;font-weight:bold;"><span style="transform:scaleX(1.000);transform-origin:center center">Fe + traces</span></div>
<div class="t" style="left:397px;top:619.5px;width:86px;height:18px;color:#f2f2f2;font-size:10.5px;justify-content:center;font-weight:bold;"><span style="transform:scaleX(1.000);transform-origin:center center">100% Fe</span></div>
<div class="t" style="left:49px;top:637.5px;width:200px;height:18.5px;color:#fff;font-size:10.5px;justify-content:flex-end;font-weight:bold;padding-right:3px;"><span style="transform:scaleX(1.000);transform-origin:right center">Fe 11% DTPA</span></div>
<div class="t" style="left:319px;top:637.5px;width:78px;height:18.5px;color:#eef7dd;font-size:10.5px;justify-content:center;font-weight:bold;"><span style="transform:scaleX(1.000);transform-origin:center center">Fe</span></div>
<div class="t" style="left:397px;top:637.5px;width:86px;height:18.5px;color:#f2f2f2;font-size:10.5px;justify-content:center;font-weight:bold;"><span style="transform:scaleX(1.000);transform-origin:center center">0% Fe</span></div>
<div class="t" style="left:49px;top:656px;width:200px;height:18.3px;color:#fff;font-size:10.5px;justify-content:flex-end;font-weight:bold;padding-right:3px;"><span style="transform:scaleX(1.000);transform-origin:right center">Fe Gluconate 11% (E579)</span></div>
<div class="t" style="left:319px;top:656px;width:78px;height:18.3px;color:#eef7dd;font-size:10.5px;justify-content:center;font-weight:bold;"><span style="transform:scaleX(1.000);transform-origin:center center">Fe</span></div>
<div class="t" style="left:397px;top:656px;width:86px;height:18.3px;color:#f2f2f2;font-size:10.5px;justify-content:center;font-weight:bold;"><span style="transform:scaleX(1.000);transform-origin:center center">0% Fe</span></div>
<div class="t" style="left:249px;top:619.5px;width:70px;height:18px;color:#fff;font-size:10.5px;justify-content:center;font-weight:bold;"><span style="transform:scaleX(1.000);transform-origin:center center">1</span></div>
<div class="t" style="left:483px;top:619.5px;width:88px;height:18px;color:#24982e;font-size:10.5px;justify-content:center;font-weight:bold;padding-left:15px;"><span style="transform:scaleX(1.000);transform-origin:center center">84 %</span></div>
<svg style="left:490.500px;top:622.5px" width="11" height="12" viewBox="0 0 11 12" fill="none" stroke="#2a9a3a" stroke-width="1.900" stroke-linejoin="round"><path d="M1.300 6.700l3 3.300 5.200-9"/></svg>
<div class="t" style="left:571px;top:619.5px;width:86px;height:18px;color:#fff;font-size:10.5px;justify-content:center;font-weight:bold;"><span style="transform:scaleX(1.000);transform-origin:center center">56.25 gr/L *</span></div>
<div class="t" style="left:657px;top:619.5px;width:86px;height:18px;color:#fff;font-size:10.5px;justify-content:center;font-weight:bold;"><span style="transform:scaleX(1.000);transform-origin:center center">11.81 gr</span></div>
<div class="t" style="left:743px;top:619.5px;width:85px;height:18px;color:#fff;font-size:10.5px;justify-content:center;font-weight:bold;"><span style="transform:scaleX(1.000);transform-origin:center center">0.472 gr</span></div>
<div class="t" style="left:824px;top:619.5px;width:57px;height:18px;color:#fff;font-size:10.5px;justify-content:center;"><span style="transform:scaleX(1.000);transform-origin:center center">0.058</span></div>
<div class="t" style="left:873px;top:619.5px;width:53px;height:18px;color:#fff;font-size:10.5px;justify-content:center;"><span style="transform:scaleX(1.000);transform-origin:center center">0.014</span></div>
<div class="t" style="left:918px;top:619.5px;width:56px;height:18px;color:#fff;font-size:10.5px;justify-content:center;"><span style="transform:scaleX(1.000);transform-origin:center center">0.011</span></div>
<div class="t" style="left:966px;top:619.5px;width:53px;height:18px;color:#fff;font-size:10.5px;justify-content:center;"><span style="transform:scaleX(1.000);transform-origin:center center">0.006</span></div>
<div class="t" style="left:1011px;top:619.5px;width:56px;height:18px;color:#fff;font-size:10.5px;justify-content:center;"><span style="transform:scaleX(1.000);transform-origin:center center">0.002</span></div>
<div class="t" style="left:1059px;top:619.5px;width:56px;height:18px;color:#fff;font-size:10.5px;justify-content:center;"><span style="transform:scaleX(1.000);transform-origin:center center">0.0010</span></div>
<div style="left:50px;top:618.9px;width:199px;height:1.2px;background:#c8464c;"></div>
<div style="left:50px;top:636.9px;width:199px;height:1.2px;background:#c8464c;"></div>
<div style="left:50px;top:655.4px;width:199px;height:1.2px;background:#c8464c;"></div>
<div style="left:248.3px;top:619.5px;width:1.2px;height:54.8px;background:#c8464c;"></div>
<div style="left:49px;top:673.5px;width:200px;height:1.2px;background:#e8e8e8;"></div>
<div style="left:248.5px;top:554.5px;width:1px;height:119.8px;background:#333;"></div>
<div style="left:318px;top:554.5px;height:119.8px;width:0;border-left:1px dashed #222"></div>
<div style="left:396.2px;top:554.5px;height:119.8px;width:0;border-left:1px dashed #222"></div>
<div style="left:482.5px;top:554.5px;width:1px;height:119.8px;background:#333;"></div>
<div style="left:570.5px;top:554.5px;height:119.8px;width:0;border-left:1px dashed #222"></div>
<div style="left:656.5px;top:554.5px;width:1px;height:119.8px;background:#333;"></div>
<div style="left:742.5px;top:554.5px;width:1px;height:119.8px;background:#333;"></div>
<div style="left:827.5px;top:554.5px;width:1px;height:119.8px;background:#333;"></div>
<div style="left:828px;top:534px;width:1px;height:337px;background:#222;"></div>
<div class="t" style="left:483px;top:674px;width:345px;height:18px;color:#a6a6a6;font-size:10.5px;justify-content:flex-end;font-weight:bold;padding-right:77px;"><span style="transform:scaleX(0.959);transform-origin:right center">* Based on Fe 13.2% EDTA solubility.</span></div>
<div style="left:828.5px;top:674.3px;width:628.5px;height:14.7px;background:#595959;"></div>
<div class="t" style="left:828px;top:674.8px;width:524px;height:14.7px;color:#fff;font-size:10.5px;justify-content:center;font-weight:bold;"><span style="transform:scaleX(1.000);transform-origin:center center">Total per dose</span></div>
<div style="left:828.5px;top:707px;width:628.5px;height:16px;background:#595959;"></div>
<div class="t" style="left:828px;top:707.5px;width:524px;height:16px;color:#fff;font-size:10.5px;justify-content:center;font-weight:bold;"><span style="transform:scaleX(1.000);transform-origin:center center">Total weekly</span></div>
<div style="left:828.5px;top:739px;width:628.5px;height:15.7px;background:#595959;"></div>
<div class="t" style="left:828px;top:739.5px;width:524px;height:15.7px;color:#fff;font-size:10.5px;justify-content:center;font-weight:bold;"><span style="transform:scaleX(1.000);transform-origin:center center">Added from your WC (Water Report)</span></div>
<svg style="left:828px;top:689px" width="629" height="18" viewBox="828 689 629 18" shape-rendering="crispEdges"><rect x="828" y="689" width="629" height="18" fill="url(#hp)"/></svg>
<div style="left:828px;top:689px;width:49px;height:18px;background:#a6a6a6;"></div>
<div style="left:877px;top:689px;width:45px;height:18px;background:#a6a6a6;"></div>
<div style="left:922px;top:689px;width:48px;height:18px;background:#a6a6a6;"></div>
<div style="left:970px;top:689px;width:45px;height:18px;background:#a6a6a6;"></div>
<div style="left:1015px;top:689px;width:48px;height:18px;background:#a6a6a6;"></div>
<div style="left:1063px;top:689px;width:48px;height:18px;background:#a6a6a6;"></div>
<div class="t" style="left:824px;top:690.5px;width:57px;height:18px;color:#fff;font-size:10.5px;justify-content:center;"><span style="transform:scaleX(1.000);transform-origin:center center">0.058</span></div>
<div class="t" style="left:873px;top:690.5px;width:53px;height:18px;color:#fff;font-size:10.5px;justify-content:center;"><span style="transform:scaleX(1.000);transform-origin:center center">0.014</span></div>
<div class="t" style="left:918px;top:690.5px;width:56px;height:18px;color:#fff;font-size:10.5px;justify-content:center;"><span style="transform:scaleX(1.000);transform-origin:center center">0.011</span></div>
<div class="t" style="left:966px;top:690.5px;width:53px;height:18px;color:#fff;font-size:10.5px;justify-content:center;"><span style="transform:scaleX(1.000);transform-origin:center center">0.006</span></div>
<div class="t" style="left:1011px;top:690.5px;width:56px;height:18px;color:#fff;font-size:10.5px;justify-content:center;"><span style="transform:scaleX(1.000);transform-origin:center center">0.002</span></div>
<div class="t" style="left:1059px;top:690.5px;width:56px;height:18px;color:#fff;font-size:10.5px;justify-content:center;"><span style="transform:scaleX(1.000);transform-origin:center center">0.0010</span></div>
<svg style="left:828px;top:723px" width="629" height="16" viewBox="828 723 629 16" shape-rendering="crispEdges"><rect x="828" y="723" width="629" height="16" fill="url(#hp)"/></svg>
<div style="left:828px;top:723px;width:49px;height:16px;background:#a6a6a6;"></div>
<div style="left:877px;top:723px;width:45px;height:16px;background:#a6a6a6;"></div>
<div style="left:922px;top:723px;width:48px;height:16px;background:#a6a6a6;"></div>
<div style="left:970px;top:723px;width:45px;height:16px;background:#a6a6a6;"></div>
<div style="left:1015px;top:723px;width:48px;height:16px;background:#a6a6a6;"></div>
<div style="left:1063px;top:723px;width:48px;height:16px;background:#a6a6a6;"></div>
<div class="t" style="left:824px;top:724px;width:57px;height:16px;color:#fff;font-size:10.5px;justify-content:center;"><span style="transform:scaleX(1.000);transform-origin:center center">0.350</span></div>
<div class="t" style="left:873px;top:724px;width:53px;height:16px;color:#fff;font-size:10.5px;justify-content:center;"><span style="transform:scaleX(1.000);transform-origin:center center">0.083</span></div>
<div class="t" style="left:918px;top:724px;width:56px;height:16px;color:#fff;font-size:10.5px;justify-content:center;"><span style="transform:scaleX(1.000);transform-origin:center center">0.067</span></div>
<div class="t" style="left:966px;top:724px;width:53px;height:16px;color:#fff;font-size:10.5px;justify-content:center;"><span style="transform:scaleX(1.000);transform-origin:center center">0.038</span></div>
<div class="t" style="left:1011px;top:724px;width:56px;height:16px;color:#fff;font-size:10.5px;justify-content:center;"><span style="transform:scaleX(1.000);transform-origin:center center">0.010</span></div>
<div class="t" style="left:1059px;top:724px;width:56px;height:16px;color:#fff;font-size:10.5px;justify-content:center;"><span style="transform:scaleX(1.000);transform-origin:center center">0.0063</span></div>
<svg style="left:828px;top:755px" width="629" height="15" viewBox="828 755 629 15" shape-rendering="crispEdges"><rect x="828" y="755" width="629" height="15" fill="url(#hp)"/></svg>
<div style="left:1161px;top:754.7px;width:51px;height:15.6px;background:#a6a6a6;"></div>
<div class="t" style="left:1157px;top:757.7px;width:59px;height:15.6px;color:#fff;font-size:10.5px;justify-content:center;"><span style="transform:scaleX(1.000);transform-origin:center center">0.9</span></div>
<div style="left:828.5px;top:770.3px;width:628.5px;height:2px;background:#92d050;"></div>
<div style="left:828.5px;top:772.3px;width:628.5px;height:33.7px;background:#595959;"></div>
<div class="t" style="left:828px;top:771.3px;width:462px;height:16.7px;color:#92d050;font-size:10.5px;justify-content:flex-end;font-weight:bold;padding-right:2px;"><span style="transform:scaleX(0.987);transform-origin:right center">GRAN TOTAL PPM (and % of CLONE TARGET - Fe only) &lt;&gt; Total weekly TDS ≈ 1</span></div>
<div class="t" style="left:824px;top:789px;width:57px;height:17px;color:#92d050;font-size:10.5px;justify-content:center;font-weight:bold;"><span style="transform:scaleX(1.000);transform-origin:center center">Fe</span></div>
<div class="t" style="left:873px;top:789px;width:53px;height:17px;color:#fff;font-size:10.5px;justify-content:center;font-weight:bold;"><span style="transform:scaleX(1.000);transform-origin:center center">Mn</span></div>
<div class="t" style="left:918px;top:789px;width:56px;height:17px;color:#fff;font-size:10.5px;justify-content:center;font-weight:bold;"><span style="transform:scaleX(1.000);transform-origin:center center">Zn</span></div>
<div class="t" style="left:966px;top:789px;width:53px;height:17px;color:#fff;font-size:10.5px;justify-content:center;font-weight:bold;"><span style="transform:scaleX(1.000);transform-origin:center center">B</span></div>
<div class="t" style="left:1011px;top:789px;width:56px;height:17px;color:#fff;font-size:10.5px;justify-content:center;font-weight:bold;"><span style="transform:scaleX(1.000);transform-origin:center center">Cu</span></div>
<div class="t" style="left:1059px;top:789px;width:56px;height:17px;color:#fff;font-size:10.5px;justify-content:center;font-weight:bold;"><span style="transform:scaleX(1.000);transform-origin:center center">Mo</span></div>
<div class="t" style="left:1107px;top:789px;width:58px;height:17px;color:#fff;font-size:10.5px;justify-content:center;font-weight:bold;"><span style="transform:scaleX(1.000);transform-origin:center center">Co</span></div>
<div class="t" style="left:1157px;top:789px;width:59px;height:17px;color:#fff;font-size:10.5px;justify-content:center;font-weight:bold;"><span style="transform:scaleX(1.000);transform-origin:center center">Ni</span></div>
<div class="t" style="left:1208px;top:789px;width:58px;height:17px;color:#fff;font-size:10.5px;justify-content:center;font-weight:bold;"><span style="transform:scaleX(1.000);transform-origin:center center">Mg</span></div>
<div class="t" style="left:1258px;top:789px;width:53px;height:17px;color:#fff;font-size:10.5px;justify-content:center;font-weight:bold;"><span style="transform:scaleX(1.000);transform-origin:center center">Ca</span></div>
<div class="t" style="left:1303px;top:789px;width:53px;height:17px;color:#fff;font-size:10.5px;justify-content:center;font-weight:bold;"><span style="transform:scaleX(1.000);transform-origin:center center">SO<sub>4</sub></span></div>
<div class="t" style="left:1348px;top:789px;width:59px;height:17px;color:#fff;font-size:10.5px;justify-content:center;font-weight:bold;"><span style="transform:scaleX(1.000);transform-origin:center center">dGH</span></div>
<div class="t" style="left:1399px;top:789px;width:62px;height:17px;color:#fff;font-size:10.5px;justify-content:center;font-weight:bold;"><span style="transform:scaleX(1.000);transform-origin:center center">dKH</span></div>
<svg style="left:828px;top:806px" width="629" height="16" viewBox="828 806 629 16" shape-rendering="crispEdges"><rect x="828" y="806" width="629" height="16" fill="url(#hp)"/></svg>
<div style="left:828px;top:806px;width:49px;height:16.5px;background:#595959;"></div>
<div class="t" style="left:824px;top:806px;width:57px;height:16.5px;color:#92d050;font-size:10.5px;justify-content:center;"><span style="transform:scaleX(1.000);transform-origin:center center">0.350</span></div>
<div style="left:877px;top:806px;width:45px;height:16.5px;background:#595959;"></div>
<div class="t" style="left:873px;top:806px;width:53px;height:16.5px;color:#fff;font-size:10.5px;justify-content:center;"><span style="transform:scaleX(1.000);transform-origin:center center">0.083</span></div>
<div style="left:922px;top:806px;width:48px;height:16.5px;background:#595959;"></div>
<div class="t" style="left:918px;top:806px;width:56px;height:16.5px;color:#fff;font-size:10.5px;justify-content:center;"><span style="transform:scaleX(1.000);transform-origin:center center">0.067</span></div>
<div style="left:970px;top:806px;width:45px;height:16.5px;background:#595959;"></div>
<div class="t" style="left:966px;top:806px;width:53px;height:16.5px;color:#fff;font-size:10.5px;justify-content:center;"><span style="transform:scaleX(1.000);transform-origin:center center">0.038</span></div>
<div style="left:1015px;top:806px;width:48px;height:16.5px;background:#595959;"></div>
<div class="t" style="left:1011px;top:806px;width:56px;height:16.5px;color:#fff;font-size:10.5px;justify-content:center;"><span style="transform:scaleX(1.000);transform-origin:center center">0.010</span></div>
<div style="left:1063px;top:806px;width:48px;height:16.5px;background:#595959;"></div>
<div class="t" style="left:1059px;top:806px;width:56px;height:16.5px;color:#fff;font-size:10.5px;justify-content:center;"><span style="transform:scaleX(1.000);transform-origin:center center">0.0063</span></div>
<div style="left:1161px;top:806px;width:51px;height:16.5px;background:#595959;"></div>
<div class="t" style="left:1157px;top:806px;width:59px;height:16.5px;color:#fff;font-size:10.5px;justify-content:center;"><span style="transform:scaleX(1.000);transform-origin:center center">0.9000</span></div>
<svg style="left:828px;top:822px" width="629" height="17" viewBox="828 822 629 17" shape-rendering="crispEdges"><rect x="828" y="822" width="629" height="17" fill="url(#hp)"/></svg>
<div style="left:828.5px;top:822.5px;width:48.5px;height:16.5px;background:#595959;"></div>
<div class="t" style="left:824px;top:822.5px;width:57px;height:16.5px;color:#92d050;font-size:10.5px;justify-content:center;"><span style="transform:scaleX(1.000);transform-origin:center center">100.0%</span></div>
<svg style="left:828px;top:839px" width="629" height="16" viewBox="828 839 629 16" shape-rendering="crispEdges"><rect x="828" y="839" width="629" height="16" fill="url(#hp)"/></svg>
<div style="left:828.5px;top:839px;width:186.5px;height:16.3px;background:#f6dfca;"></div>
<div class="t" style="left:828px;top:839px;width:187px;height:16.3px;color:#111;font-size:10.5px;justify-content:center;font-weight:bold;"><span style="transform:scaleX(0.908);transform-origin:center center">YOUR TRACE PPM vs. &gt;&gt;</span></div>
<div style="left:1015px;top:839px;width:197px;height:16.3px;background:#8db4e2;"></div>
<div class="t" style="left:1015px;top:839px;width:197px;height:16.3px;color:#eaf2fb;font-size:10.5px;justify-content:center;"><span style="transform:scaleX(1.000);transform-origin:center center">EI Dosing Mid *</span></div>
<div style="left:1213px;top:839px;width:139px;height:16.3px;background:#c0e08a;"></div>
<div class="t" style="left:1213px;top:839px;width:139px;height:16.3px;color:#f0f8e0;font-size:10.5px;justify-content:center;"><span style="transform:scaleX(1.000);transform-origin:center center">per week</span></div>
<svg style="left:828px;top:855px" width="629" height="16" viewBox="828 855 629 16" shape-rendering="crispEdges"><rect x="828" y="855" width="629" height="16" fill="url(#hp)"/></svg>
<div style="left:828px;top:855.3px;width:49px;height:15.7px;background:#8e8e8e;"></div>
<div class="t" style="left:824px;top:855.8px;width:57px;height:15.7px;color:#fff;font-size:10.5px;justify-content:center;"><span style="transform:scaleX(1.000);transform-origin:center center">0.350</span></div>
<div style="left:1351.5px;top:554.5px;height:316.5px;width:0;border-left:1px dashed #222"></div>
<div class="t" style="left:990px;top:874px;width:270px;height:18px;color:#a6a6a6;font-size:10.5px;justify-content:flex-end;font-weight:bold;padding-right:20px;"><span style="transform:scaleX(0.971);transform-origin:right center">*  Popular non-commercial fertilizing regimes.</span></div>
<div style="left:0.3px;top:605.6px;width:748.2px;height:92.5px;border:3px solid #ea1214;box-sizing:border-box"></div>
<div style="left:773.3px;top:766.2px;width:443.9px;height:110.3px;border:3px solid #ea1214;box-sizing:border-box"></div>
<div class="t" style="left:-3.9px;top:618px;width:60px;height:60px;color:#f80d0d;font-size:56.7px;justify-content:center;font-weight:bold;"><span style="transform:scaleX(0.940);transform-origin:center center">9</span></div>
<div class="t" style="left:787.1px;top:789.75px;width:60px;height:60px;color:#f80d0d;font-size:55.9px;justify-content:center;font-weight:bold;"><span style="transform:scaleX(1.000);transform-origin:center center">0</span></div>
<svg style="left:770px;top:795px" width="30" height="50" viewBox="770 795 30 50"><path d="M793.700 838.400H785V812.500C782.300 815 779.300 816.800 775.800 818V810.500C777.700 809.900 779.800 808.700 782 807C784.200 805.200 785.700 803 786.600 800H793.700Z" fill="#f80d0d"/></svg>
</div>
<div style="left:0px;top:0px;width:1600px;height:121px;background:#0c0c0c;"></div>
<div style="left:0px;top:120.5px;width:1578px;height:1px;background:#2e2e2e;"></div>
<svg style="left:16px;top:15px" width="20" height="19" viewBox="0 0 20 19"><rect x="5" y="1" width="14" height="17" rx="1.5" fill="#21a366"/><rect x="12" y="1" width="7" height="8.5" fill="#33c481"/><rect x="12" y="9.5" width="7" height="8.5" fill="#107c41"/><rect x="5" y="9.5" width="7" height="8.5" fill="#185c37"/><rect x="0" y="4.5" width="11" height="11" rx="1.2" fill="#107c41"/><path d="M3.2 7l4.6 6M7.8 7l-4.6 6" stroke="#fff" stroke-width="1.5"/></svg>
<svg style="left:50px;top:16px" width="18" height="18" viewBox="0 0 18 18" fill="none" stroke="#e6e6e6" stroke-width="1.3" stroke-linecap="round" stroke-linejoin="round"><path d="M1.5 3a1.5 1.5 0 011.5-1.5h9.5l4 4V15a1.5 1.5 0 01-1.5 1.5H3A1.5 1.5 0 011.5 15z"/><path d="M5 1.5v4.5h7V1.5M4.5 16.500v-6h9v6"/></svg>
<svg style="left:79px;top:15px" width="18" height="19" viewBox="0 0 18 19" fill="none" stroke="#e6e6e6" stroke-width="1.3" stroke-linecap="round" stroke-linejoin="round"><path d="M2 2.500v6h6"/><path d="M2.500 8.200C4.500 4 9 2 12.500 4.500c3.500 2.600 3 7.500-.5 10l-4 3"/></svg>
<svg style="left:102px;top:22px" width="8" height="6" viewBox="0 0 8 6" fill="none" stroke="#e6e6e6" stroke-width="1.3" stroke-linecap="round" stroke-linejoin="round"><path d="M1 1l3 3 3-3"/></svg>
<svg style="left:119px;top:15px" width="18" height="19" viewBox="0 0 18 19" fill="none" stroke="#4a4a4a" stroke-width="1.3" stroke-linecap="round" stroke-linejoin="round"><path d="M16 2.500v6h-6"/><path d="M15.500 8.200C13.500 4 9 2 5.500 4.500c-3.500 2.600-3 7.500.5 10l4 3"/></svg>
<svg style="left:142px;top:22px" width="8" height="6" viewBox="0 0 8 6" fill="none" stroke="#4a4a4a" stroke-width="1.2"><path d="M1 1l3 3 3-3"/></svg>
<svg style="left:161px;top:20px" width="12" height="10" viewBox="0 0 12 10" fill="none" stroke="#e6e6e6" stroke-width="1.3" stroke-linecap="round" stroke-linejoin="round"><path d="M2 1.500h8M2.500 5l3.500 3.500L9.500 5"/></svg>
<div class="t" style="left:187px;top:12.5px;width:213px;height:24px;color:#f0f0f0;font-size:13px;justify-content:flex-start;padding-left:0px;"><span style="transform:scaleX(0.907);transform-origin:left center">IFC-Fert-Calculator_v1.3.1.xlsx  -  Excel</span></div>
<div style="left:617px;top:8px;width:382px;height:33px;background:#222;border:1px solid #505050;border-radius:5px;box-sizing:border-box"></div>
<svg style="left:629px;top:16px" width="16" height="16" viewBox="0 0 16 16" fill="none" stroke="#e6e6e6" stroke-width="1.3" stroke-linecap="round" stroke-linejoin="round"><circle cx="9.500" cy="6.500" r="4.800"/><path d="M6 10.200L1.500 14.800"/></svg>
<div class="t" style="left:660px;top:13px;width:100px;height:24px;color:#c8c8c8;font-size:14.5px;justify-content:flex-start;padding-left:0px;"><span style="transform:scaleX(0.914);transform-origin:left center">Search</span></div>
<svg style="left:1237px;top:2px" width="18" height="13" viewBox="0 0 18 13"><defs><linearGradient id="g1" x1="0" x2="1"><stop offset=".2" stop-color="#0c0c0c"/><stop offset=".8" stop-color="#a0a0a0"/></linearGradient><linearGradient id="g2" x1="1" x2="0"><stop offset=".2" stop-color="#0c0c0c"/><stop offset=".8" stop-color="#a0a0a0"/></linearGradient></defs><rect x="1.200" y="1" width="12.800" height="11" fill="url(#g1)" stroke="#ececec" stroke-width="1.300"/><rect x="10.800" y="3.300" width="6.200" height="5.700" fill="#f2f2f2"/><rect x="12.800" y="5.800" width="2.400" height="1.500" fill="#555"/></svg>
<svg style="left:1268px;top:2px" width="18" height="13" viewBox="0 0 18 13"><rect x="3.500" y="1" width="12.800" height="11" fill="url(#g2)" stroke="#ececec" stroke-width="1.300"/><rect x=".7" y="3.300" width="6.200" height="5.700" fill="#f2f2f2"/><rect x="2.500" y="5.800" width="2.400" height="1.500" fill="#555"/></svg>
<svg style="left:1300px;top:2px" width="14" height="13" viewBox="0 0 14 13"><path d="M7.500 1l1.500-.5 4 4-.5 1.500-1.500-.3-2.300 2.300.3 2.500-1.500.5-2.300-2.800L1.500 12.500l-.8-.8L5 7.500 2.300 5.200l.5-1.500 2.500.3L7.800 1.700z" fill="#ececec"/></svg>
<svg style="left:1409.500px;top:8.500px" width="32" height="31" viewBox="0 0 32 34" preserveAspectRatio="none"><defs><linearGradient id="fg" x1="0" x2="1"><stop offset="0" stop-color="#b08a78"/><stop offset=".45" stop-color="#c0957f"/><stop offset=".6" stop-color="#8a5a48"/><stop offset="1" stop-color="#3a241e"/></linearGradient><filter id="fb" x="-20%" y="-20%" width="140%" height="140%"><feGaussianBlur stdDeviation="0.9"/></filter></defs><g filter="url(#fb)"><path d="M7 12.500c0-5.500 4-8.500 9.500-8.500s10 3 10 8.500c0 6-1.500 9.500-3.500 12.500-1.500 2.500-3 4-6.500 4s-5-1.500-6.500-4c-2-3-3-6.500-3-12.500z" fill="url(#fg)"/><path d="M9.500 14h12" stroke="#5a3528" stroke-width="1.200" opacity=".7"/><path d="M16 13v6" stroke="#4a2a20" stroke-width="1.600" opacity=".55"/></g></svg>
<div style="left:1470px;top:24px;width:10px;height:1.3px;background:#e6e6e6;"></div>
<svg style="left:1518px;top:18px" width="13" height="13" viewBox="0 0 13 13" fill="none" stroke="#e6e6e6" stroke-width="1.3" stroke-linecap="round" stroke-linejoin="round"><rect x="1" y="3.500" width="8.500" height="8.500" rx="2"/><path d="M4 1.200h5.500a2.500 2.500 0 012.500 2.500V9"/></svg>
<svg style="left:1569px;top:19px" width="12" height="12" viewBox="0 0 12 12" fill="none" stroke="#e6e6e6" stroke-width="1.3" stroke-linecap="round" stroke-linejoin="round"><path d="M1 1l10 10M11 1L1 11"/></svg>
<div class="t" style="left:22px;top:54px;width:20px;height:24px;color:#f2f2f2;font-size:15px;justify-content:flex-start;padding-left:0px;"><span style="transform:scaleX(0.827);transform-origin:left center">File</span></div>
<div class="t" style="left:71px;top:54px;width:38px;height:24px;color:#f2f2f2;font-size:15px;justify-content:flex-start;padding-left:0px;"><span style="transform:scaleX(0.950);transform-origin:left center">Home</span></div>
<div class="t" style="left:129px;top:54px;width:36px;height:24px;color:#f2f2f2;font-size:15px;justify-content:flex-start;padding-left:0px;"><span style="transform:scaleX(0.960);transform-origin:left center">Insert</span></div>
<div class="t" style="left:186px;top:54px;width:32px;height:24px;color:#f2f2f2;font-size:15px;justify-content:flex-start;padding-left:0px;"><span style="transform:scaleX(0.914);transform-origin:left center">Draw</span></div>
<div class="t" style="left:239px;top:54px;width:77px;height:24px;color:#f2f2f2;font-size:15px;justify-content:flex-start;padding-left:0px;"><span style="transform:scaleX(0.914);transform-origin:left center">Page Layout</span></div>
<div class="t" style="left:338px;top:54px;width:58px;height:24px;color:#f2f2f2;font-size:15px;justify-content:flex-start;padding-left:0px;"><span style="transform:scaleX(0.928);transform-origin:left center">Formulas</span></div>
<div class="t" style="left:416px;top:54px;width:29px;height:24px;color:#f2f2f2;font-size:15px;justify-content:flex-start;padding-left:0px;"><span style="transform:scaleX(0.915);transform-origin:left center">Data</span></div>
<div class="t" style="left:467px;top:54px;width:44px;height:24px;color:#f2f2f2;font-size:15px;justify-content:flex-start;padding-left:0px;"><span style="transform:scaleX(0.895);transform-origin:left center">Review</span></div>
<div class="t" style="left:532px;top:54px;width:30px;height:24px;color:#f2f2f2;font-size:15px;justify-content:flex-start;padding-left:0px;"><span style="transform:scaleX(0.930);transform-origin:left center">View</span></div>
<div class="t" style="left:583px;top:54px;width:29px;height:24px;color:#f2f2f2;font-size:15px;justify-content:flex-start;padding-left:0px;"><span style="transform:scaleX(0.940);transform-origin:left center">Help</span></div>
<div style="left:1513px;top:53px;width:74px;height:25px;background:#40ad66;border-radius:4px"></div>
<svg style="left:1517px;top:58px" width="14" height="14" viewBox="0 0 14 14" fill="none" stroke="#0c3318" stroke-width="1.2" stroke-linejoin="round"><path d="M6 4.500H2.500a1 1 0 00-1 1V12a1 1 0 001 1H10a1 1 0 001-1V9.500"/><path d="M8.500 1.200L12.800 5 8.500 8.500V6.300C6.500 6.300 5.200 7 4.500 8.500 4.700 5.500 6.200 3.800 8.500 3.500z"/></svg>
<div class="t" style="left:1534px;top:54px;width:37px;height:24px;color:#0c3318;font-size:14.5px;justify-content:flex-start;padding-left:0px;"><span style="transform:scaleX(0.905);transform-origin:left center">Share</span></div>
<svg style="left:1575px;top:63px" width="8" height="6" viewBox="0 0 8 6" fill="none" stroke="#0c3318" stroke-width="1.2"><path d="M1 1l3 3 3-3"/></svg>
<div style="left:8px;top:90px;width:106px;height:24px;background:#262626;border:1px solid #3d3d3d;border-radius:4px;box-sizing:border-box"></div>
<div class="t" style="left:14px;top:90px;width:46px;height:24px;color:#f2f2f2;font-size:14.5px;justify-content:flex-start;padding-left:0px;"><span style="transform:scaleX(1.015);transform-origin:left center">H53</span></div>
<svg style="left:97px;top:98px" width="12" height="8" viewBox="0 0 12 8" fill="none" stroke="#e6e6e6" stroke-width="1.3" stroke-linecap="round" stroke-linejoin="round"><path d="M1.500 1.500l4.500 4.500 4.500-4.500"/></svg>
<div style="left:123.5px;top:97px;width:2px;height:2px;background:#e0e0e0;border-radius:1px;"></div>
<div style="left:123.5px;top:101.5px;width:2px;height:2px;background:#e0e0e0;border-radius:1px;"></div>
<div style="left:123.5px;top:106px;width:2px;height:2px;background:#e0e0e0;border-radius:1px;"></div>
<div style="left:135px;top:90px;width:77px;height:24px;background:#262626;border:1px solid #3d3d3d;border-radius:4px;box-sizing:border-box"></div>
<svg style="left:141px;top:95px" width="14" height="14" viewBox="0 0 14 14" fill="none" stroke="#7a7a7a" stroke-width="1.2" stroke-linecap="round"><path d="M1.500 1.500l11 11M12.500 1.500l-11 11"/></svg>
<svg style="left:165px;top:95px" width="17" height="14" viewBox="0 0 17 14" fill="none" stroke="#7a7a7a" stroke-width="1.2" stroke-linecap="round" stroke-linejoin="round"><path d="M1.500 7.500l4.500 4.500L15.500 2"/></svg>
<div class="t" style="left:189px;top:89px;width:22px;height:24px;color:#d8d8d8;font-family:'Liberation Serif',serif;font-style:italic;font-weight:bold;font-size:18px;justify-content:center"><span>f<span style="font-size:13px;position:relative;top:2px">x</span></span></div>
<div style="left:217px;top:90px;width:1375px;height:24px;background:#262626;border:1px solid #3d3d3d;border-radius:4px;box-sizing:border-box"></div>
<svg style="left:1575px;top:97px" width="14" height="9" viewBox="0 0 14 9" fill="none" stroke="#e6e6e6" stroke-width="1.3" stroke-linecap="round" stroke-linejoin="round"><path d="M1.500 1.500l5.500 5.500 5.500-5.500"/></svg>
<div style="left:0px;top:914px;width:1600px;height:86px;background:#0c0c0c;"></div>
<div style="left:0px;top:943.5px;width:1600px;height:1px;background:#2c2c2c;"></div>
<div style="left:0px;top:976.5px;width:1600px;height:1px;background:#202020;"></div>
<div style="left:0px;top:977.5px;width:1600px;height:22.5px;background:#101010;"></div>
<div style="left:0px;top:998px;width:1600px;height:2px;background:#2a0a0c;"></div>
<div style="left:1578px;top:121px;width:22px;height:823px;background:#0e0e0e;"></div>
<div style="left:1577px;top:121px;width:1px;height:823px;background:#2a2a2a;"></div>
<div style="left:1580px;top:122px;width:19px;height:821px;background:#151515;border-radius:8px"></div>
<svg style="left:1584.500px;top:125.500px" width="10" height="8" viewBox="0 0 10 8"><path d="M5 .3l4.800 7.400H.2z" fill="#a0a0a0"/></svg>
<div style="left:1585px;top:579px;width:9px;height:349px;background:#9c9c9c;border-radius:4.500px"></div>
<svg style="left:1584.500px;top:933.500px" width="10" height="8" viewBox="0 0 10 8"><path d="M5 7.700l4.800-7.400H.2z" fill="#a0a0a0"/></svg>
<svg style="left:26px;top:952.500px" width="9" height="13" viewBox="0 0 9 13" fill="none" stroke="#c4c4c4" stroke-width="1.250" stroke-linecap="round" stroke-linejoin="round"><path d="M6.500 1.500L2 6.500l4.500 5"/></svg>
<svg style="left:59.500px;top:952.500px" width="9" height="13" viewBox="0 0 9 13" fill="none" stroke="#c4c4c4" stroke-width="1.250" stroke-linecap="round" stroke-linejoin="round"><path d="M2.500 1.500L7 6.500l-4.500 5"/></svg>
<div style="left:117.5px;top:947.5px;width:56.5px;height:25px;background:#d9d9d9;border-radius:5px"></div>
<div class="t" style="left:117.5px;top:948px;width:56.5px;height:25px;color:#111;font-size:15px;justify-content:center;"><span style="transform:scaleX(0.925);transform-origin:center center">Home</span></div>
<div style="left:183px;top:947.5px;width:123px;height:25px;background:#00b050;border-radius:5px"></div>
<div class="t" style="left:183px;top:948px;width:123px;height:25px;color:#0b2b14;font-size:15px;justify-content:center;"><span style="transform:scaleX(0.971);transform-origin:center center">TankAndDosing</span></div>
<div style="left:450px;top:947.5px;width:107px;height:25px;background:#ffff1f;border-radius:5px"></div>
<div class="t" style="left:450px;top:948px;width:107px;height:25px;color:#222;font-size:15px;justify-content:center;"><span style="transform:scaleX(0.940);transform-origin:center center">DIYCalculator</span></div>
<div style="left:566px;top:947.5px;width:142px;height:25px;background:#ff66cc;border-radius:5px"></div>
<div class="t" style="left:566px;top:948px;width:142px;height:25px;color:#3a1030;font-size:15px;justify-content:center;"><span style="transform:scaleX(0.928);transform-origin:center center">DIYTraceCalculator</span></div>
<div style="left:717.5px;top:947.5px;width:125px;height:25px;background:#92cddc;border-radius:5px"></div>
<div class="t" style="left:717.5px;top:948px;width:125px;height:25px;color:#10303a;font-size:15px;justify-content:center;"><span style="transform:scaleX(0.947);transform-origin:center center">ReminCalculator</span></div>
<div style="left:851.5px;top:947.5px;width:91px;height:25px;background:#7030a0;border-radius:5px"></div>
<div class="t" style="left:851.5px;top:948px;width:91px;height:25px;color:#fff;font-size:15px;justify-content:center;"><span style="transform:scaleX(0.939);transform-origin:center center">CostDetails</span></div>
<div style="left:951.5px;top:947.5px;width:101.5px;height:25px;background:#0000ff;border-radius:5px"></div>
<div class="t" style="left:951.5px;top:948px;width:101.5px;height:25px;color:#fff;font-size:15px;justify-content:center;"><span style="transform:scaleX(0.946);transform-origin:center center">CoreSettings</span></div>
<div style="left:1061.5px;top:947.5px;width:92px;height:25px;background:#948a54;border-radius:5px"></div>
<div class="t" style="left:1061.5px;top:948px;width:92px;height:25px;color:#1c1a08;font-size:15px;justify-content:center;"><span style="transform:scaleX(0.941);transform-origin:center center">ChangeLog</span></div>
<div style="left:313.5px;top:943.5px;width:128.5px;height:29px;background:linear-gradient(#fff 0,#fdf1e7 40%,#f8cbad 100%);border-radius:5px"></div>
<div class="t" style="left:313.5px;top:943.5px;width:128.5px;height:26px;color:#222;font-size:15px;justify-content:center;"><span style="transform:scaleX(0.998);transform-origin:center center">TargetCalculator</span></div>
<div style="left:323px;top:967px;width:109px;height:1.5px;background:#217346;"></div>
<div style="left:1162px;top:947.5px;width:18px;height:25px;background:#808080;border-radius:5px 0 0 5px"></div>
<div class="t" style="left:1166px;top:948px;width:16px;height:25px;color:#fff;font-size:15px;justify-content:center;"><span style="transform:scaleX(0.950);transform-origin:center center">G</span></div>
<div style="left:178px;top:951px;width:1px;height:19px;background:#3a3a3a;"></div>
<div style="left:309.5px;top:951px;width:1px;height:19px;background:#3a3a3a;"></div>
<div style="left:445px;top:951px;width:1px;height:19px;background:#3a3a3a;"></div>
<div style="left:561px;top:951px;width:1px;height:19px;background:#3a3a3a;"></div>
<div style="left:712px;top:951px;width:1px;height:19px;background:#3a3a3a;"></div>
<div style="left:846.5px;top:951px;width:1px;height:19px;background:#3a3a3a;"></div>
<div style="left:946.5px;top:951px;width:1px;height:19px;background:#3a3a3a;"></div>
<div style="left:1056.5px;top:951px;width:1px;height:19px;background:#3a3a3a;"></div>
<div style="left:1157px;top:951px;width:1px;height:19px;background:#3a3a3a;"></div>
<div style="left:1190.5px;top:957.5px;width:3px;height:3px;background:#e6e6e6;border-radius:1.500px;"></div>
<div style="left:1195px;top:957.5px;width:3px;height:3px;background:#e6e6e6;border-radius:1.500px;"></div>
<div style="left:1199.5px;top:957.5px;width:3px;height:3px;background:#e6e6e6;border-radius:1.500px;"></div>
<svg style="left:1222px;top:952px" width="14" height="14" viewBox="0 0 14 14" fill="none" stroke="#e6e6e6" stroke-width="1.3" stroke-linecap="round" stroke-linejoin="round"><path d="M7 1v12M1 7h12"/></svg>
<div style="left:1262px;top:953px;width:2.5px;height:2.5px;background:#e6e6e6;border-radius:1px;"></div>
<div style="left:1262px;top:958px;width:2.5px;height:2.5px;background:#e6e6e6;border-radius:1px;"></div>
<div style="left:1262px;top:963px;width:2.5px;height:2.5px;background:#e6e6e6;border-radius:1px;"></div>
<div style="left:1281px;top:947px;width:298px;height:25px;background:#141414;border-radius:9px"></div>
<svg style="left:1284.500px;top:955px" width="8" height="9" viewBox="0 0 8 9"><path d="M.5 4.500l7-4v8z" fill="#a8a8a8"/></svg>
<div style="left:1298px;top:955px;width:265px;height:9px;background:#9e9e9e;border-radius:4.500px"></div>
<svg style="left:1568px;top:955px" width="8" height="9" viewBox="0 0 8 9"><path d="M7.500 4.500l-7-4v8z" fill="#a8a8a8"/></svg>
<div class="t" style="left:11px;top:978px;width:49px;height:22px;color:#d0d0d0;font-size:12px;justify-content:flex-start;padding-left:0px;"><span style="transform:scaleX(0.865);transform-origin:left center">Ready</span></div>
<svg style="left:62px;top:980px" width="17" height="17" viewBox="0 0 17 17" fill="none" stroke="#e6e6e6" stroke-width="1.1" stroke-linecap="round" stroke-linejoin="round"><circle cx="7" cy="3" r="1.800"/><path d="M1.500 5.500c3.500 1.500 7.500 1.500 11 0M5 7v3l-2.500 5.500M9 7v3l1 2.500M5 10h4"/><path d="M10.500 11.500l5 5M15.500 11.500l-5 5"/></svg>
<div class="t" style="left:82px;top:978px;width:148px;height:22px;color:#f2f2f2;font-size:12px;justify-content:flex-start;font-weight:bold;padding-left:0px;"><span style="transform:scaleX(0.886);transform-origin:left center">Accessibility: Investigate</span></div>
<div style="left:1296px;top:978px;width:40px;height:20px;background:#222;"></div>
<svg style="left:1308px;top:981px" width="15" height="15" viewBox="0 0 15 15" fill="none" stroke="#f0f0f0" stroke-width="1.3"><rect x="1" y="1" width="13" height="13"/><path d="M1 5.300h13M1 9.600h13M5.300 1v13M9.600 1v13"/></svg>
<svg style="left:1350px;top:981px" width="15" height="15" viewBox="0 0 15 15" fill="none" stroke="#d0d0d0" stroke-width="1.2"><rect x="1" y="1" width="13" height="13"/><rect x="3.500" y="3.500" width="8" height="8"/><path d="M5 6h5M5 8.500h5"/></svg>
<svg style="left:1391px;top:981px" width="15" height="15" viewBox="0 0 15 15" fill="none" stroke="#d0d0d0" stroke-width="1.2"><rect x="1" y="1" width="13" height="13"/><path d="M5 1v7.500M10 1v7.500M5 8.500h5"/></svg>
<div style="left:1425px;top:988px;width:8px;height:1px;background:#b0b0b0;"></div>
<div style="left:1440px;top:988px;width:103px;height:1px;background:#8a8a8a;"></div>
<div style="left:1485px;top:982px;width:2.5px;height:14px;background:#d0d0d0;"></div>
<div style="left:1488px;top:985px;width:1px;height:8px;background:#8a8a8a;"></div>
<div style="left:1548px;top:988px;width:10px;height:1px;background:#b0b0b0;"></div>
<div style="left:1552.5px;top:983.5px;width:1px;height:10px;background:#b0b0b0;"></div>
<div class="t" style="left:1570px;top:978px;width:29px;height:22px;color:#e0e0e0;font-size:12px;justify-content:flex-start;padding-left:0px;"><span style="transform:scaleX(0.874);transform-origin:left center">90%</span></div>
</div></body></html>
